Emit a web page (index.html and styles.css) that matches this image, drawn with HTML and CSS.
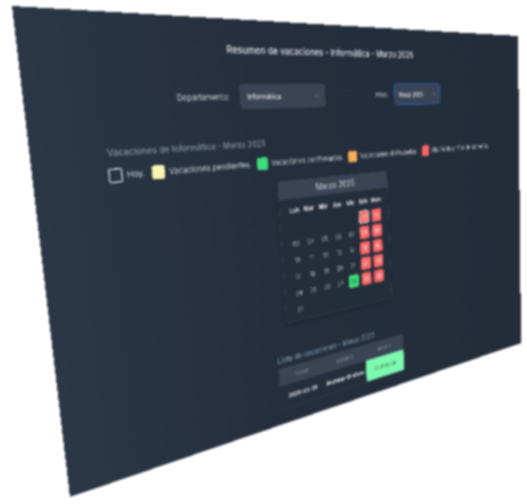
FILE: index.html
```html
<!DOCTYPE html>
<html lang="es">
<head>
    <meta charset="UTF-8">
    <meta name="viewport" content="width=device-width, initial-scale=1.0">
    <title>Resumen de vacaciones</title>
    <link rel="stylesheet" href="styles.css">
</head>
<body>
    <div class="stage">
        <main class="panel">
            <h1 class="title">Resumen de vacaciones - Informática - Marzo 2025</h1>

            <!-- Filtros -->
            <div class="filters">
                <label class="filter-label">Departamento:</label>
                <div class="select select-dept">
                    <span>Informática</span>
                    <svg class="chevron" viewBox="0 0 12 12"><path d="M2.5 4.5 6 8l3.5-3.5"/></svg>
                </div>
                <label class="filter-label label-month">Mes:</label>
                <div class="select select-month">
                    <span>Marzo 2025</span>
                    <svg class="chevron" viewBox="0 0 12 12"><path d="M2.5 4.5 6 8l3.5-3.5"/></svg>
                </div>
            </div>

            <h2 class="subtitle">Vacaciones de Informática - Marzo 2025</h2>

            <!-- Leyenda -->
            <div class="legend">
                <div class="legend-item"><span class="swatch swatch-today"></span>Hoy.</div>
                <div class="legend-item"><span class="swatch swatch-pending"></span>Vacaciones pendientes.</div>
                <div class="legend-item"><span class="swatch swatch-confirmed"></span>Vacaciones confirmadas.</div>
                <div class="legend-item"><span class="swatch swatch-used"></span>Vacaciones disfrutadas.</div>
                <div class="legend-item"><span class="swatch swatch-holiday"></span>Día festivo / Fin de semana.</div>
            </div>

            <!-- Calendario -->
            <section class="calendar">
                <div class="calendar-head">Marzo 2025</div>
                <div class="calendar-grid">
                    <span class="dow">Lun</span><span class="dow">Mar</span><span class="dow">Mié</span><span class="dow">Jue</span><span class="dow">Vie</span><span class="dow">Sáb</span><span class="dow">Dom</span>
                    <span></span><span></span><span></span><span></span><span></span><span class="day holiday today">01</span><span class="day holiday">02</span>
                    <span class="day">03</span><span class="day">04</span><span class="day">05</span><span class="day">06</span><span class="day">07</span><span class="day holiday">08</span><span class="day holiday">09</span>
                    <span class="day">10</span><span class="day">11</span><span class="day">12</span><span class="day">13</span><span class="day">14</span><span class="day holiday">15</span><span class="day holiday">16</span>
                    <span class="day">17</span><span class="day">18</span><span class="day">19</span><span class="day">20</span><span class="day">21</span><span class="day holiday">22</span><span class="day holiday">23</span>
                    <span class="day">24</span><span class="day">25</span><span class="day">26</span><span class="day">27</span><span class="day confirmed">28</span><span class="day holiday">29</span><span class="day holiday">30</span>
                    <span class="day">31</span>
                </div>
            </section>

            <h3 class="list-title">Lista de vacaciones - Marzo 2025</h3>
            <table class="list">
                <thead>
                    <tr><th>FECHA</th><th>USUARIO</th><th>ESTADO</th></tr>
                </thead>
                <tbody>
                    <tr><td>2025-03-28</td><td>Bozhidar Dimitrov</td><td class="status">Confirmado</td></tr>
                </tbody>
            </table>
        </main>
    </div>
</body>
</html>
```

FILE: styles.css
```css
html, body {
    margin: 0;
    padding: 0;
    height: 100%;
    overflow: hidden;
    background-color: #fff;
}

body {
    font-family: 'Inter', 'Liberation Sans', sans-serif;
}

/* The screenshot is a tilted page, so the whole panel goes through one matrix */
.stage {
    width: 527px;
    height: 504px;
    overflow: hidden;
    filter: blur(0.8px);
}

.panel {
    box-sizing: border-box;
    width: 1200px;
    height: 800px;
    padding: 42px 120px 0;
    overflow: hidden;
    color: #e5e9ef;
    background: linear-gradient(90deg, #2b3746 0%, #252e3c 35%, #232c39 100%);
    transform-origin: 0 0;
    transform: matrix3d(0.70584, 0.04475, 0, 0.0005486,
                        0.08279, 0.68679, 0, 0.00014696,
                        0, 0, 1, 0,
                        12, 6, 0, 1);
}

.title {
    margin: 0;
    font-size: 19px;
    line-height: 26px;
    font-weight: 500;
    text-align: center;
    color: #e8ecf1;
}

/* Filters */
.filters {
    display: flex;
    align-items: center;
    height: 47px;
    margin-top: 48px;
    padding-left: 138px;
}

.filter-label {
    width: 127px;
    font-size: 15px;
    color: #d5dae2;
}

.label-month {
    width: 53px;
    margin-left: 136px;
}

.select {
    box-sizing: border-box;
    display: flex;
    align-items: center;
    justify-content: space-between;
    height: 100%;
    padding: 0 16px;
    border-radius: 8px;
    font-size: 14px;
    font-weight: 500;
    color: #f4f6f8;
    background-color: #3a4454;
}

.select-dept {
    width: 200px;
}

.select-month {
    width: 142px;
    border: 2px solid #2563c9;
    padding: 0 10px;
    font-size: 13px;
}

.chevron {
    width: 13px;
    height: 13px;
    fill: none;
    stroke: #7c8798;
    stroke-width: 1.4;
}

/* Legend */
.subtitle {
    margin: 53px 0 0 3px;
    font-size: 16px;
    line-height: 24px;
    font-weight: 500;
    color: #8b98aa;
}

.legend {
    display: flex;
    justify-content: space-between;
    margin-top: 15px;
    padding-left: 2px;
    font-size: 15px;
    line-height: 24px;
    color: #d5dae2;
}

.legend-item {
    display: flex;
    align-items: center;
    gap: 8px;
}

.swatch {
    box-sizing: border-box;
    width: 24px;
    height: 24px;
    border-radius: 4px;
}

.swatch-today { border: 2px solid #e5e9ef; }
.swatch-pending { background-color: #fdf6b2; }
.swatch-confirmed { background-color: #3fdc7c; }
.swatch-used { background-color: #f6ad55; }
.swatch-holiday { background-color: #f56565; }

/* Calendar */
.calendar {
    box-sizing: border-box;
    width: 288px;
    height: 288px;
    margin: 25px auto 0;
    border: 1px solid #3d4858;
    border-radius: 8px;
    overflow: hidden;
    background-color: #242d3a;
    box-shadow: 0 4px 10px rgba(0, 0, 0, 0.2);
}

.calendar-head {
    height: 36px;
    font-size: 18px;
    line-height: 36px;
    text-align: center;
    color: #d9dee5;
    background-color: #3a4454;
}

.calendar-grid {
    display: grid;
    grid-template-columns: repeat(7, 36px);
    grid-auto-rows: 34px;
    justify-content: center;
    align-items: center;
    justify-items: center;
    padding-top: 6px;
    font-size: 13px;
}

.dow {
    font-weight: 700;
    color: #f2f4f7;
}

.day {
    display: flex;
    align-items: center;
    justify-content: center;
    box-sizing: border-box;
    width: 28px;
    height: 28px;
    border-radius: 5px;
    color: #cdd3dc;
}

.holiday {
    color: #fff;
    background-color: #f56565;
}

.confirmed {
    color: #1d6b3c;
    background-color: #3fdc7c;
}

.today {
    border: 2px solid #f2f4f7;
}

/* Table */
.list-title {
    margin: 62px 0 0 310px;
    font-size: 16px;
    line-height: 22px;
    font-weight: 400;
    color: #8fb0c9;
}

.list {
    width: 343px;
    margin: 6px 0 0 310px;
    border-collapse: collapse;
    table-layout: fixed;
    font-size: 12px;
}

.list th {
    height: 37px;
    padding: 0;
    font-size: 10px;
    font-weight: 400;
    color: #8a97a8;
    background-color: #3a4454;
}

.list td {
    height: 49px;
    padding: 0;
    text-align: center;
    font-weight: 700;
    color: #f2f4f7;
    border-bottom: 1px solid #374151;
}

.list td.status {
    font-weight: 400;
    color: #2f6b4a;
    background-color: #7dfab0;
}
```
